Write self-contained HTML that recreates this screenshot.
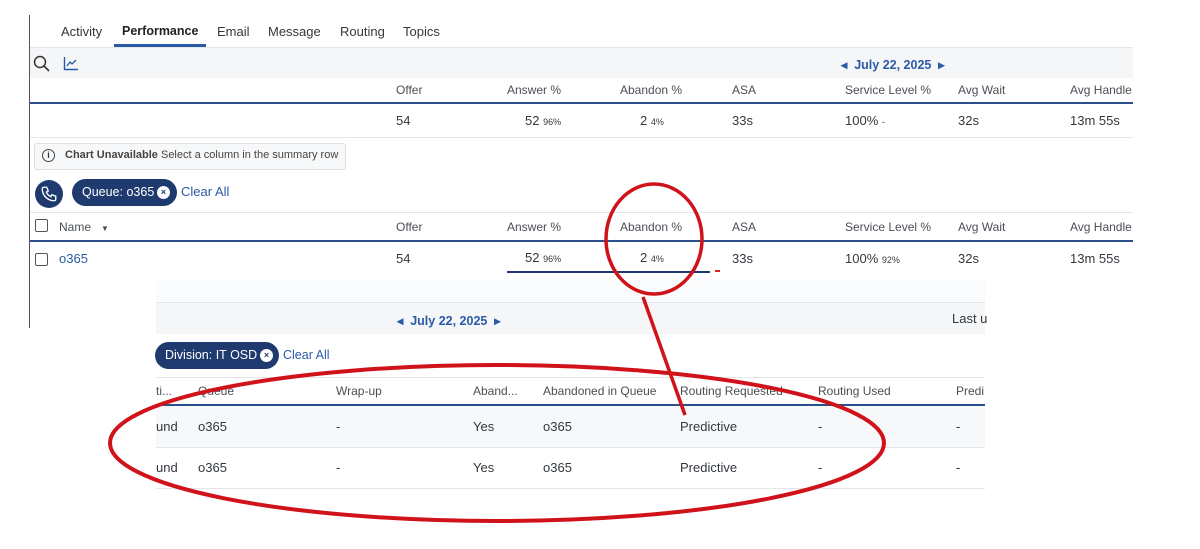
<!DOCTYPE html>
<html><head><style>
body{margin:0;width:1200px;height:549px;background:#fff;font-family:"Liberation Sans",sans-serif;color:#33383d;position:relative;overflow:hidden;font-size:12.5px}
.a{position:absolute;white-space:nowrap}
.s{font-size:9px}
.h{font-size:12px;color:#4a4f55}
.blue{color:#2a5aa6}
.n{font-size:13px}
</style></head><body>
<div class="a" style="left:29px;top:15px;width:1px;height:313px;background:#555"></div>
<!-- tabs -->
<div class="a" style="left:30px;top:15px;width:1103px;height:32px;border-bottom:1px solid #e4e6e9"></div>
<div class="a" style="left:61px;top:24px;font-size:13px">Activity</div>
<div class="a" style="left:122px;top:24px;font-size:12.5px;font-weight:bold;color:#222">Performance</div>
<div class="a" style="left:114px;top:44px;width:92px;height:3px;background:#2a5aa6"></div>
<div class="a" style="left:217px;top:24px;font-size:13px">Email</div>
<div class="a" style="left:268px;top:24px;font-size:13px">Message</div>
<div class="a" style="left:340px;top:24px;font-size:13px">Routing</div>
<div class="a" style="left:403px;top:24px;font-size:13px">Topics</div>
<!-- toolbar -->
<div class="a" style="left:30px;top:48px;width:1103px;height:30px;background:#f5f6f8"></div>
<svg class="a" style="left:33px;top:55px" width="18" height="18" viewBox="0 0 18 18"><circle cx="7" cy="7" r="5.5" fill="none" stroke="#333" stroke-width="1.5"/><path d="M11 11l5 5" stroke="#333" stroke-width="1.6"/></svg>
<svg class="a" style="left:63px;top:56px" width="16" height="15" viewBox="0 0 16 15"><path d="M1.5 1v12.5H15" fill="none" stroke="#2a5aa6" stroke-width="1.4"/><path d="M4 10l3-4 2 2 4-4" fill="none" stroke="#2a5aa6" stroke-width="1.3"/></svg>
<div class="a blue" style="left:841px;top:57px;font-size:12.5px;font-weight:bold;color:#2a5aa6">◂ &nbsp;July 22, 2025 &nbsp;▸</div>
<!-- header row -->
<div class="a" style="left:30px;top:102px;width:1103px;height:2px;background:#2a4f8a"></div>
<div class="a h" style="left:396px;top:83px">Offer</div>
<div class="a h" style="left:507px;top:83px">Answer %</div>
<div class="a h" style="left:620px;top:83px">Abandon %</div>
<div class="a h" style="left:732px;top:83px">ASA</div>
<div class="a h" style="left:845px;top:83px">Service Level %</div>
<div class="a h" style="left:958px;top:83px">Avg Wait</div>
<div class="a h" style="left:1070px;top:83px">Avg Handle</div>
<div class="a" style="left:30px;top:137px;width:1103px;height:1px;background:#e4e6e9"></div>
<div class="a n" style="left:396px;top:113px">54</div>
<div class="a n" style="left:525px;top:113px">52 <span class="s">96%</span></div>
<div class="a n" style="left:640px;top:113px">2 <span class="s">4%</span></div>
<div class="a n" style="left:732px;top:113px">33s</div>
<div class="a n" style="left:845px;top:113px">100% <span class="s">-</span></div>
<div class="a n" style="left:958px;top:113px">32s</div>
<div class="a n" style="left:1070px;top:113px">13m 55s</div>
<!-- chart unavailable -->
<div class="a" style="left:34px;top:143px;width:310px;height:25px;border:1px solid #dcdfe3;border-radius:3px;background:#f7f8f9"></div>
<div class="a" style="left:42px;top:149px;width:11px;height:11px;border:1.3px solid #444;border-radius:50%;font-size:9px;text-align:center;line-height:11px;font-weight:bold">i</div>
<div class="a" style="left:65px;top:149px;font-size:11px;color:#444"><b>Chart Unavailable</b> Select a column in the summary row</div>
<!-- queue chip -->
<div class="a" style="left:35px;top:180px;width:28px;height:28px;border-radius:50%;background:#1e3a6e"></div>
<svg class="a" style="left:40px;top:185px" width="18" height="18" viewBox="0 0 24 24"><path d="M5 3h4l2 5-2.5 1.5a11 11 0 0 0 6 6L16 13l5 2v4a2 2 0 0 1-2 2A16 16 0 0 1 3 5a2 2 0 0 1 2-2z" fill="none" stroke="#fff" stroke-width="1.8"/></svg>
<div class="a" style="left:72px;top:179px;width:105px;height:27px;border-radius:14px;background:#1e3a6e"></div>
<div class="a" style="left:82px;top:185px;color:#fff;font-size:12.5px">Queue: o365</div>
<div class="a" style="left:157px;top:186px;width:13px;height:13px;border-radius:50%;background:#fff;color:#1e3a6e;font-size:9px;text-align:center;line-height:13px;font-weight:bold">×</div>
<div class="a blue" style="left:181px;top:184px;font-size:13px">Clear All</div>
<!-- table -->
<div class="a" style="left:30px;top:212px;width:1103px;height:1px;background:#e4e6e9"></div>
<div class="a" style="left:35px;top:219px;width:11px;height:11px;border:1px solid #555;border-radius:2px"></div>
<div class="a h" style="left:59px;top:220px">Name &nbsp; <span style="font-size:8px">▼</span></div>
<div class="a h" style="left:396px;top:220px">Offer</div>
<div class="a h" style="left:507px;top:220px">Answer %</div>
<div class="a h" style="left:620px;top:220px">Abandon %</div>
<div class="a h" style="left:732px;top:220px">ASA</div>
<div class="a h" style="left:845px;top:220px">Service Level %</div>
<div class="a h" style="left:958px;top:220px">Avg Wait</div>
<div class="a h" style="left:1070px;top:220px">Avg Handle</div>
<div class="a" style="left:30px;top:240px;width:1103px;height:2px;background:#2a4f8a"></div>
<div class="a" style="left:35px;top:253px;width:11px;height:11px;border:1px solid #555;border-radius:2px"></div>
<div class="a blue n" style="left:59px;top:251px">o365</div>
<div class="a n" style="left:396px;top:251px">54</div>
<div class="a n" style="left:525px;top:250px">52 <span class="s">96%</span></div>
<div class="a n" style="left:640px;top:250px">2 <span class="s">4%</span></div>
<div class="a n" style="left:732px;top:251px">33s</div>
<div class="a n" style="left:845px;top:251px">100% <span class="s">92%</span></div>
<div class="a n" style="left:958px;top:251px">32s</div>
<div class="a n" style="left:1070px;top:251px">13m 55s</div>
<div class="a" style="left:507px;top:271px;width:203px;height:2px;background:#1e3a6e"></div>
<div class="a" style="left:715px;top:270px;width:5px;height:2px;background:#d22"></div>
<!-- lower panel -->
<div class="a" style="left:156px;top:280px;width:829px;height:22px;background:#fafbfc"></div>
<div class="a" style="left:156px;top:302px;width:829px;height:31px;background:#f5f6f8;border-top:1px solid #e4e6e9"></div>
<div class="a" style="left:397px;top:313px;font-size:12.5px;font-weight:bold;color:#2a5aa6">◂ &nbsp;July 22, 2025 &nbsp;▸</div>
<div class="a" style="left:952px;top:311px;font-size:13px">Last u</div>
<div class="a" style="left:155px;top:342px;width:124px;height:27px;border-radius:14px;background:#1e3a6e"></div>
<div class="a" style="left:165px;top:348px;color:#fff;font-size:12.5px">Division: IT OSD</div>
<div class="a" style="left:260px;top:349px;width:13px;height:13px;border-radius:50%;background:#fff;color:#1e3a6e;font-size:9px;text-align:center;line-height:13px;font-weight:bold">×</div>
<div class="a blue" style="left:283px;top:348px;font-size:12.5px">Clear All</div>
<div class="a" style="left:156px;top:377px;width:829px;height:1px;background:#e4e6e9"></div>
<div class="a h" style="left:156px;top:384px">ti...</div>
<div class="a h" style="left:198px;top:384px">Queue</div>
<div class="a h" style="left:336px;top:384px">Wrap-up</div>
<div class="a h" style="left:473px;top:384px">Aband...</div>
<div class="a h" style="left:543px;top:384px">Abandoned in Queue</div>
<div class="a h" style="left:680px;top:384px">Routing Requested</div>
<div class="a h" style="left:818px;top:384px">Routing Used</div>
<div class="a h" style="left:956px;top:384px">Predi</div>
<div class="a" style="left:156px;top:404px;width:829px;height:2px;background:#2a4f8a"></div>
<div class="a" style="left:156px;top:406px;width:829px;height:41px;background:#f7f8f9;border-bottom:1px solid #e4e6e9"></div>
<div class="a" style="left:156px;top:488px;width:829px;height:1px;background:#e4e6e9"></div>
<div class="a" style="left:156px;top:419px;font-size:13px">und</div><div class="a" style="left:198px;top:419px;font-size:13px">o365</div><div class="a" style="left:336px;top:419px;font-size:13px">-</div><div class="a" style="left:473px;top:419px;font-size:13px">Yes</div><div class="a" style="left:543px;top:419px;font-size:13px">o365</div><div class="a" style="left:680px;top:419px;font-size:13px">Predictive</div><div class="a" style="left:818px;top:419px;font-size:13px">-</div><div class="a" style="left:956px;top:419px;font-size:13px">-</div>
<div class="a" style="left:156px;top:460px;font-size:13px">und</div><div class="a" style="left:198px;top:460px;font-size:13px">o365</div><div class="a" style="left:336px;top:460px;font-size:13px">-</div><div class="a" style="left:473px;top:460px;font-size:13px">Yes</div><div class="a" style="left:543px;top:460px;font-size:13px">o365</div><div class="a" style="left:680px;top:460px;font-size:13px">Predictive</div><div class="a" style="left:818px;top:460px;font-size:13px">-</div><div class="a" style="left:956px;top:460px;font-size:13px">-</div>
<!-- red annotations -->
<svg class="a" style="left:0;top:0" width="1200" height="549">
<ellipse cx="654" cy="239" rx="48" ry="55" fill="none" stroke="#d0131b" stroke-width="3.5"/>
<path d="M643 297L685 415" stroke="#d0131b" stroke-width="3.5"/>
<ellipse cx="497" cy="443" rx="387" ry="78" fill="none" stroke="#d0131b" stroke-width="4"/>
</svg>
</body></html>
